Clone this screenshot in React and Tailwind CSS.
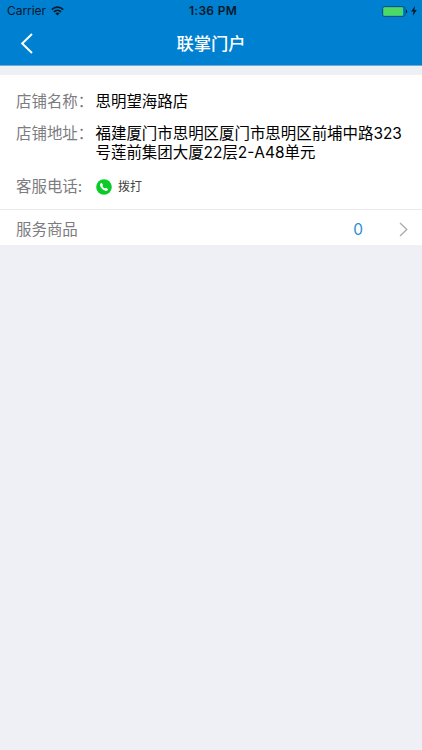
import React from 'react';

const shop = {
  name: '思明望海路店',
  address: '福建厦门市思明区厦门市思明区前埔中路323号莲前集团大厦22层2-A48单元',
  productCount: 0
};

const StatusBar = () => (
  <div className="grid h-[22px] grid-cols-[1fr_auto_1fr] items-center pl-[7px] pr-[5px] text-[#06182b]">
    <div className="flex items-center gap-[5px]">
      <span className="text-[12px] leading-[22px] tracking-[-0.05px]">Carrier</span>
      <svg width="13" height="10" viewBox="0 0 13 10" fill="none" stroke="currentColor" strokeWidth="1.7">
        <path d="M0.8 3.6C4 0.4 9 0.4 12.2 3.6" />
        <path d="M2.9 5.9C4.9 3.9 8.1 3.9 10.1 5.9" />
        <path d="M6.5 9.6L4.3 7.3C5.5 6.2 7.5 6.2 8.7 7.3Z" fill="currentColor" stroke="none" />
      </svg>
    </div>
    <span className="pl-0.5 text-[12px] font-semibold leading-[22px] tracking-[0.3px]">1:36 PM</span>
    <div className="flex items-center justify-end gap-[3px]">
      <svg width="26" height="11" viewBox="0 0 26 11">
        <rect x="0.5" y="0.5" width="22.5" height="10" rx="2" fill="none" stroke="#075488" />
        <rect x="1.3" y="1.3" width="19.7" height="8.4" rx="1" fill="#4cd964" />
        <path d="M24 3.7C25.5 4 25.5 7 24 7.3Z" fill="#06182b" />
      </svg>
      <svg width="6" height="10" viewBox="0 0 6 10" fill="currentColor">
        <path d="M4 0L0.2 5.5H2.5L1.8 9.8L5.8 4H3.4Z" />
      </svg>
    </div>
  </div>
);

const NavBar = () => (
  <div className="grid h-[43px] grid-cols-[1fr_auto_1fr] items-center px-5">
    <button type="button" aria-label="返回">
      <svg width="14" height="21" viewBox="0 0 14 21" fill="none" stroke="white" strokeWidth="2">
        <path d="M12 1L2.2 10.5L12 20" />
      </svg>
    </button>
    <h1 className="text-[17.3px] font-medium leading-[43px] text-white">联掌门户</h1>
  </div>
);

const InfoRow = ({ label, children }) => (
  <div className="flex">
    <span className="w-[79.5px] shrink-0 whitespace-nowrap text-[#7c7c81]">{label}</span>
    <div className="text-black">{children}</div>
  </div>
);

const App = () => {
  return (
    <div className="min-h-screen bg-[#eff0f5] font-['Inter','Noto_Sans_CJK_SC',sans-serif]">
      <header className="border-b border-[#6fa9d8] bg-[#0080d0]">
        <StatusBar />
        <NavBar />
      </header>

      <main className="mt-[9px] bg-white text-[15.45px] leading-[19px]">
        <section className="flex h-[135px] flex-col border-b border-[#e9e9eb] pl-4 pr-3 pt-[17px]">
          <InfoRow label="店铺名称：">{shop.name}</InfoRow>
          <div className="mt-[13px]">
            <InfoRow label="店铺地址：">
              <p className="w-[312px] break-all">{shop.address}</p>
            </InfoRow>
          </div>
          <div className="mt-[15px]">
            <InfoRow label="客服电话:">
              <button type="button" className="flex h-[19px] items-center gap-1.5 pl-[0.5px]">
                <svg width="16" height="16" viewBox="0 0 16 16">
                  <circle cx="8" cy="8" r="7.8" fill="#0acb27" />
                  <path
                    d="M4.4 4.5L5.6 3.7L7.1 5.9L6.3 7C6.9 8.2 7.8 9 9 9.6L10.1 8.8L12.2 10.3L11.4 11.6C10.2 12.5 7.9 11.6 6.1 9.8C4.3 8 3.5 5.8 4.4 4.5Z"
                    fill="white"
                  />
                </svg>
                <span className="text-[12px] text-[#444]">拨打</span>
              </button>
            </InfoRow>
          </div>
        </section>

        <button type="button" className="flex h-[35px] w-full items-center pl-4 pr-[14px] pt-[3px] text-left">
          <span className="flex-1 text-[#7c7c81]">服务商品</span>
          <span className="mr-9 text-[#2a8fcf]">{shop.productCount}</span>
          <svg width="9" height="15" viewBox="0 0 9 15" fill="none" stroke="#aaaaaf" strokeWidth="1.3">
            <path d="M1 1L7.8 7.5L1 14" />
          </svg>
        </button>
      </main>
    </div>
  );
};

export default App;
